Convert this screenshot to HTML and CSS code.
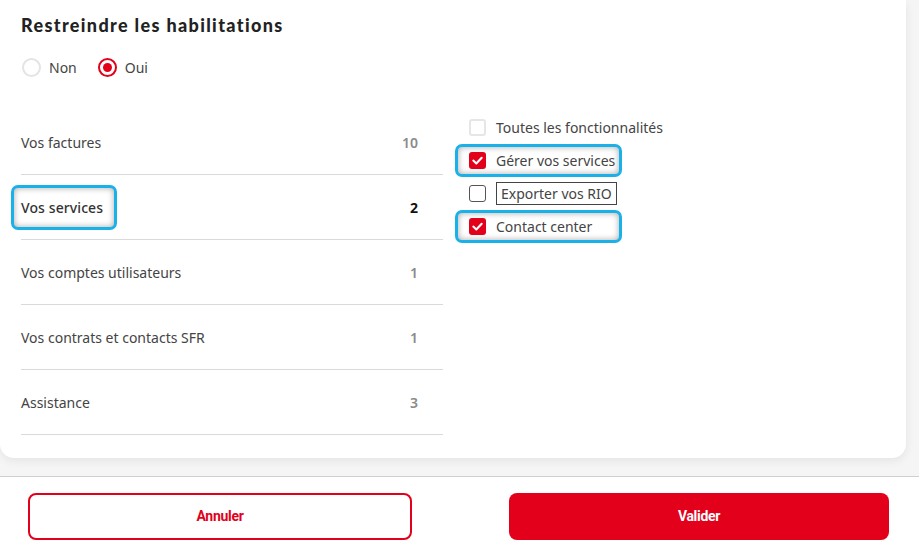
FILE: index.html
```html
<!DOCTYPE html>
<html lang="fr">
<head>
<meta charset="utf-8">
<link rel="stylesheet" href="styles.css">
</head>
<body>
<div class="page">
  <main class="scroll">
    <section class="card">
      <h2 class="title">Restreindre les habilitations</h2>
      <div class="radios">
        <label class="radio"><span class="dot"></span>Non</label>
        <label class="radio"><span class="dot on"></span>Oui</label>
      </div>
      <div class="cols">
        <ul class="cats">
          <li class="cat"><span class="cat-name">Vos factures</span><span class="count">10</span></li>
          <li class="cat active"><span class="cat-name focus">Vos services</span><span class="count">2</span></li>
          <li class="cat"><span class="cat-name">Vos comptes utilisateurs</span><span class="count">1</span></li>
          <li class="cat"><span class="cat-name">Vos contrats et contacts SFR</span><span class="count">1</span></li>
          <li class="cat"><span class="cat-name">Assistance</span><span class="count">3</span></li>
        </ul>
        <div class="perms">
          <div class="perm"><span class="chk light"></span><span class="perm-text">Toutes les fonctionnalités</span></div>
          <div class="perm focus"><span class="chk checked"><svg viewBox="0 0 17 17" width="17" height="17"><path d="M4.3 8.6 L7.3 11.4 L12.7 5.8" fill="none" stroke="#fff" stroke-width="2.1" stroke-linecap="round" stroke-linejoin="round"/></svg></span><span class="perm-text">Gérer vos services</span></div>
          <div class="perm"><span class="chk dark"></span><span class="perm-text boxed">Exporter vos RIO</span></div>
          <div class="perm focus"><span class="chk checked"><svg viewBox="0 0 17 17" width="17" height="17"><path d="M4.3 8.6 L7.3 11.4 L12.7 5.8" fill="none" stroke="#fff" stroke-width="2.1" stroke-linecap="round" stroke-linejoin="round"/></svg></span><span class="perm-text">Contact center</span></div>
        </div>
      </div>
    </section>
  </main>
  <footer class="footer">
    <button class="btn btn-outline">Annuler</button>
    <button class="btn btn-fill">Valider</button>
  </footer>
</div>
</body>
</html>
```

FILE: styles.css
```css
* { box-sizing: border-box; }
html, body { margin: 0; padding: 0; }
body {
  width: 919px;
  height: 551px;
  overflow: hidden;
  background: #f5f5f6;
  font-family: "Noto Sans", "Open Sans", sans-serif;
  color: #333;
}
.page {
  display: flex;
  flex-direction: column;
  height: 551px;
}
.scroll {
  height: 476px;
  padding-right: 13px;
}
.card {
  background: #fff;
  height: 458px;
  border-radius: 0 0 14px 14px;
  box-shadow: 0 3px 10px rgba(0, 0, 0, 0.07);
  padding: 13px 0 0 21px;
}
.title {
  margin: 0;
  font-family: "Lato", sans-serif;
  font-weight: 900;
  font-size: 18px;
  line-height: 24px;
  color: #222;
  letter-spacing: 1.35px;
}
.radios {
  display: flex;
  gap: 22px;
  margin-top: 20px;
  height: 20px;
  align-items: center;
}
.radio {
  display: flex;
  align-items: center;
  gap: 8px;
  font-size: 14px;
  color: #444;
  margin-left: 1px;
}
.radio + .radio { margin-left: -1px; }
.dot {
  width: 19px;
  height: 19px;
  border-radius: 50%;
  border: 2px solid #e4e4e4;
  display: flex;
  align-items: center;
  justify-content: center;
}
.dot.on { border-color: #e2001a; }
.dot.on::after {
  content: "";
  width: 9px;
  height: 9px;
  border-radius: 50%;
  background: #e2001a;
}
.cols {
  display: grid;
  grid-template-columns: 422px 1fr;
  column-gap: 15px;
  margin-top: 33px;
}
.cats {
  list-style: none;
  margin: 0;
  padding: 0;
}
.cat {
  height: 65px;
  border-bottom: 1px solid #dadada;
  display: flex;
  align-items: center;
  justify-content: space-between;
  padding-right: 25px;
  font-size: 14px;
  color: #444;
}
.cat-name { display: inline-flex; align-items: center; }
.count {
  font-weight: 600;
  color: #8a8a8a;
}
.cat.active .cat-name { font-weight: 500; color: #333; letter-spacing: 0.1px; }
.cat.active .count { font-weight: 700; color: #111; }
.cat-name.focus {
  height: 39px;
  padding: 0 11px 0 7px;
  margin-left: -7px;
  border-radius: 4px;
  box-shadow: 0 0 0 3px #1ab0e8, inset 0 0 6px rgba(0, 0, 0, 0.35);
}
.perms {
  display: flex;
  flex-direction: column;
  align-items: flex-start;
  padding-top: 1px;
}
.perm {
  height: 27px;
  margin: 3px 0;
  display: flex;
  align-items: center;
  gap: 10px;
  padding: 0 4px 0 11px;
  font-size: 14px;
  color: #444;
  border-radius: 4px;
  white-space: nowrap;
}
.perm.focus {
  width: 161px;
  box-shadow: 0 0 0 3px #1ab0e8, inset 0 0 6px rgba(0, 0, 0, 0.35);
}
.chk {
  width: 17px;
  height: 17px;
  border-radius: 3px;
  flex: none;
  display: flex;
}
.chk.light { border: 2px solid #e6e6e6; }
.chk.dark { border: 1.5px solid #555; }
.chk.checked { background: #e2001a; }
.perm-text.boxed {
  border: 1px solid #444;
  padding: 1px 4px;
  line-height: 19px;
}
.footer {
  flex: 1;
  background: #fff;
  border-top: 1px solid #cfcfcf;
  display: flex;
  justify-content: space-between;
  padding: 16px 30px 0 28px;
}
.btn {
  height: 47px;
  border-radius: 8px;
  font-family: "Roboto", sans-serif;
  font-weight: 700;
  font-size: 14px;
  letter-spacing: -0.3px;
  line-height: 1;
  padding-bottom: 2px;
  cursor: pointer;
}
.btn-outline {
  width: 384px;
  background: #fff;
  border: 2px solid #e2001a;
  color: #e2001a;
}
.btn-fill {
  width: 380px;
  background: #e2001a;
  border: none;
  color: #fff;
}
```
